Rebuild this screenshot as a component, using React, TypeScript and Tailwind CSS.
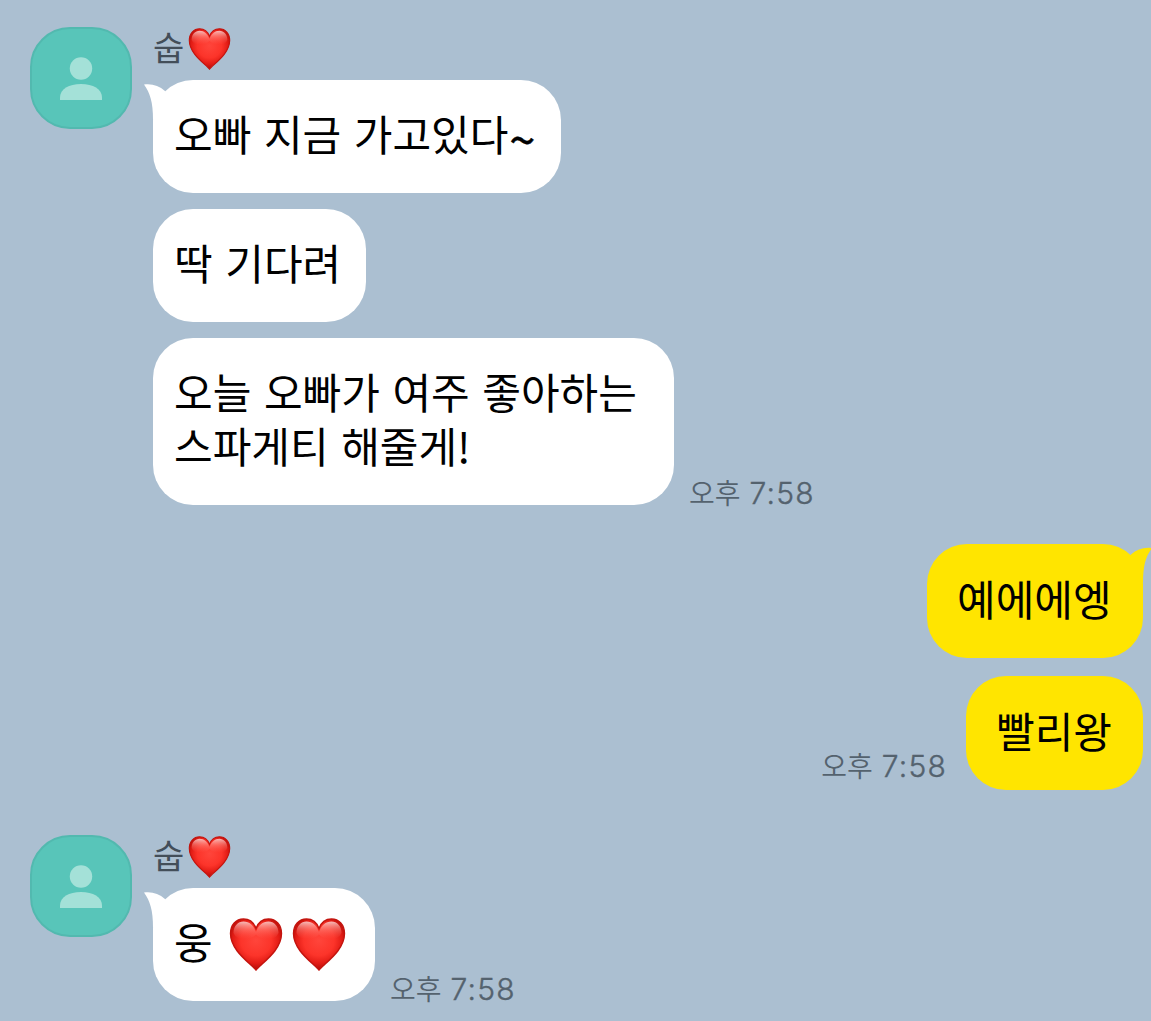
import React from 'react';

type Sender = 'other' | 'me';

interface BubbleProps {
  from: Sender;
  width: string;
  tail?: boolean;
  children: React.ReactNode;
}

const Heart: React.FC<{ className: string; id: string }> = ({ className, id }) => (
  <svg className={className} viewBox="0 0 54 53" aria-label="하트">
    <defs>
      <radialGradient id={`${id}-body`} cx="50%" cy="42%" r="60%">
        <stop offset="0%" stopColor="#ff453b" />
        <stop offset="50%" stopColor="#fc342a" />
        <stop offset="75%" stopColor="#e21c15" />
        <stop offset="100%" stopColor="#a80a06" />
      </radialGradient>
      <linearGradient id={`${id}-shine`} x1="0" y1="0" x2="0" y2="1">
        <stop offset="0%" stopColor="#fff" stopOpacity="0.7" />
        <stop offset="45%" stopColor="#ffaaa2" stopOpacity="0.4" />
        <stop offset="100%" stopColor="#ff6a60" stopOpacity="0" />
      </linearGradient>
    </defs>
    <path
      d="M27 52C22 45.500 1.500 33 1.500 15.500C1.500 7 7 1 14.500 1C20.500 1 25 5 27 10.500C29 5 33.500 1 39.500 1C47 1 52.500 7 52.500 15.500C52.500 33 32 45.500 27 52Z"
      fill={`url(#${id}-body)`}
      stroke="#c3140e"
      strokeWidth="1.400"
    />
    <path
      d="M4.500 15C4.500 8 9 3.500 14.500 3.500C20.500 3.500 24.500 7.500 27 14C29.500 7.500 33.500 3.500 39.500 3.500C45 3.500 49.500 8 49.500 15Q47 21 39.500 21Q31 21 27 16.500Q23 21 14.500 21Q7 21 4.500 15Z"
      fill={`url(#${id}-shine)`}
    />
  </svg>
);

const Avatar: React.FC = () => (
  <div className="w-[102px] h-[102px] shrink-0 rounded-[40px] bg-[#58c5b9] border-2 border-[#52b9af] flex items-center justify-center">
    <svg className="w-[42px] h-[44px] mt-px" viewBox="0 0 42 44" fill="#a4e1d8">
      <circle cx="21" cy="11.500" r="11.200" />
      <path d="M0 43V40.500C0 32 9 27 21 27S42 32 42 40.500V43Z" />
    </svg>
  </div>
);

const Bubble: React.FC<BubbleProps> = ({ from, width, tail, children }) => (
  <div
    className={`relative rounded-[40px] text-[42px] leading-[53px] [word-spacing:3.2px] text-black whitespace-nowrap ${width} ${
      from === 'me' ? 'bg-[#ffe500] pl-[30px] pt-[27px] pb-[34px]' : 'bg-white pl-[21px] pt-[26px] pb-[34px]'
    }`}
  >
    {tail && from === 'other' && (
      <svg className="absolute -left-[9px] top-[4px] w-[30px] h-[36px]" viewBox="0 0 30 36" fill="#fff">
        <path d="M0 0.500C8 -0.500 15 1.500 21 7L28 20L9 36C9 18 6 9 0 0.500Z" />
      </svg>
    )}
    {tail && from === 'me' && (
      <svg className="absolute -right-[9px] top-[3px] w-[30px] h-[36px]" viewBox="0 0 30 36" fill="#ffe500">
        <path d="M30 1C22 0 15 2 9 7.500L2 20L21 36C21 18 24 9 30 1Z" />
      </svg>
    )}
    {children}
  </div>
);

const Time: React.FC = () => (
  <div className="flex items-baseline text-[#54626e] leading-[34px] whitespace-nowrap">
    <span className="text-[28px] font-[350]">오후</span>
    <span className="ml-[9px] text-[30px] font-light [-webkit-text-stroke:0.4px_#54626e] tracking-[1.2px] font-['Inter','Liberation_Sans',sans-serif]">7:58</span>
  </div>
);

const Name: React.FC<{ id: string }> = ({ id }) => (
  <div className="flex h-[53px]">
    <span className="w-[35px] text-[34px] leading-[39px] text-[#434e59]">숩</span>
    <Heart id={id} className="w-[43px] h-[42px] mt-[1px]" />
  </div>
);

const App: React.FC = () => {
  return (
    <div className="w-[1151px] h-[1021px] overflow-hidden bg-[#abbfd1] pt-[27px] font-['Noto_Sans_CJK_KR',sans-serif]">
      {/* Incoming messages */}
      <div className="flex items-start pl-[30px] gap-[21px]">
        <Avatar />
        <div>
          <Name id="name-first" />
          <div className="flex flex-col items-start gap-4">
            <Bubble from="other" width="w-[408px]" tail>
              <div className="flex h-[53px]">
                <span>오빠 지금 가고있다</span>
                <span className="ml-px pt-[5px] text-[47px] [-webkit-text-stroke:0.5px_#000]">~</span>
              </div>
            </Bubble>
            <Bubble from="other" width="w-[213px]">딱 기다려</Bubble>
            <div className="flex items-end gap-[15px]">
              <Bubble from="other" width="w-[521px]">
                <p>오늘 오빠가 여주 좋아하는</p>
                <p className="pt-px">스파게티 해줄게!</p>
              </Bubble>
              <div className="-mb-[5px]">
                <Time />
              </div>
            </div>
          </div>
        </div>
      </div>

      {/* Replies */}
      <div className="flex flex-col items-end gap-[18px] mt-[39px] pr-2">
        <Bubble from="me" width="w-[216px]" tail>예에에엥</Bubble>
        <div className="flex items-end gap-[19px]">
          <div className="pb-[7px]">
            <Time />
          </div>
          <Bubble from="me" width="w-[177px]">빨리왕</Bubble>
        </div>
      </div>

      <div className="flex items-start pl-[30px] gap-[21px] mt-[45px]">
        <Avatar />
        <div>
          <Name id="name-last" />
          <div className="flex items-end gap-[15px]">
            <Bubble from="other" width="w-[222px]" tail>
              <div className="flex h-[53px]">
                <span className="w-[55px]">웅</span>
                <Heart id="heart-left" className="w-[54px] h-[53px] mt-[4px]" />
                <Heart id="heart-right" className="w-[54px] h-[53px] mt-[4px] ml-[9px]" />
              </div>
            </Bubble>
            <div className="-mb-[5px]">
              <Time />
            </div>
          </div>
        </div>
      </div>
    </div>
  );
};

export default App;
